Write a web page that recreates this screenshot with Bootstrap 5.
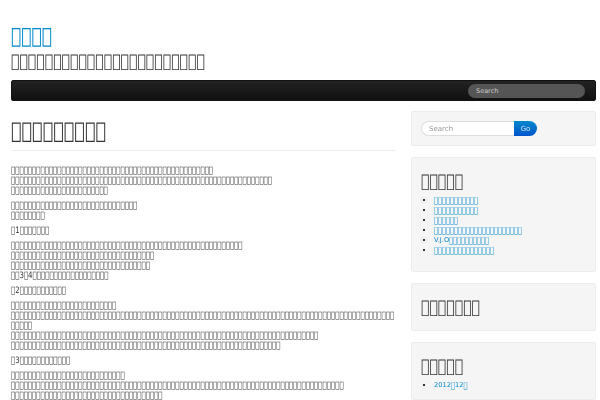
<!DOCTYPE html>
<html lang="ja"><head><meta charset="utf-8"><title>Blog</title>
<link href="https://cdn.jsdelivr.net/npm/bootstrap@5.3.0/dist/css/bootstrap.min.css" rel="stylesheet">
<style>
html,body{height:400px;overflow:hidden}
body{font-family:"DejaVu Sans",sans-serif;font-size:7.03px;line-height:10px;color:#333;text-rendering:geometricPrecision;background:#fff}
.page-wrap{padding:0 4px 0 11px;will-change:opacity}
a{color:#08c;text-decoration:none}
.tall{display:inline-block;transform:scaleY(1.25)}
.site-title{font-size:17.1px;line-height:24px;margin:25px 0 0;font-weight:400}
.site-sub{font-size:14.06px;line-height:20px;margin:3px 0 0;font-weight:400;color:#333}
.top-bar{height:21px;margin-top:8px;padding:0 10px 0 0;border-radius:2px;background:linear-gradient(#222,#111);border:1px solid #111}
.bar-search{width:117px;height:14px;border:0;border-radius:9px;background:#555;color:#ccc;font-size:6.5px;line-height:14px;padding:0 8px}
.bar-search::placeholder{color:#ccc;opacity:1}
.main-area{gap:15px;margin-top:10px}
.col-main{width:385px;flex:none}
.col-side{width:185px;flex:none}
.post-title{font-size:17.6px;line-height:24px;margin:9px 0 0;border-bottom:1px solid #eee;font-weight:400;height:30px;box-sizing:content-box}
.post-body{margin-top:14px}
.post-body p{margin:0 0 5px}
.side-well{background:#f5f5f5;border:1px solid #ececec;border-radius:2px;padding:9px;margin-bottom:11px}
.side-search{width:116px;height:15px}
.side-input{width:93px;height:15px;border:1px solid #ddd;border-right:0;border-radius:8px 0 0 8px;font-size:7.03px;padding:0 7px;background:#fff}
.side-input::placeholder{color:#999;opacity:1}
.go-btn{width:23px;height:15px;padding:0;border:0;border-radius:0 8px 8px 0;font-size:7.03px;line-height:15px;color:#d5e6f5;background:linear-gradient(#08c,#05c)}
.side-head{font-size:14.06px;line-height:20px;font-weight:400;margin:5px 0 3px}
.side-list{margin:0;padding-left:13px;font-size:6.67px;color:#333;list-style-type:square}
.side-list li{line-height:10px}
.side-links{margin-bottom:7px}
.arch-list{margin-top:1px}
</style></head>
<body>
<div class="page-wrap">
<h1 class="site-title"><a class="tall" href="#">&#xE000;&#xE000;&#xE000;&#xE000;</a></h1>
<h2 class="site-sub"><span class="tall">&#xE000;&#xE000;&#xE000;&#xE000;&#xE000;&#xE000;&#xE000;&#xE000;&#xE000;&#xE000;&#xE000;&#xE000;&#xE000;&#xE000;&#xE000;&#xE000;&#xE000;&#xE000;&#xE000;&#xE000;&#xE000;&#xE000;&#xE000;</span></h2>
<nav class="top-bar d-flex align-items-center justify-content-end"><input class="bar-search" type="text" placeholder="Search" aria-label="Search"></nav>
<div class="d-flex main-area">
<main class="col-main">
<h1 class="post-title"><span class="tall">&#xE000;&#xE000;&#xE000;&#xE000;&#xE000;&#xE000;&#xE000;&#xE000;&#xE000;</span></h1>
<div class="post-body">
<p><span class="tall">&#xE000;&#xE000;&#xE000;&#xE000;&#xE000;&#xE000;&#xE000;&#xE000;&#xE000;&#xE000;&#xE000;&#xE000;&#xE000;&#xE000;&#xE000;&#xE000;&#xE000;&#xE000;&#xE000;&#xE000;&#xE000;&#xE000;&#xE000;&#xE000;&#xE000;&#xE000;&#xE000;&#xE000;&#xE000;&#xE000;&#xE000;&#xE000;&#xE000;&#xE000;&#xE000;&#xE000;&#xE000;&#xE000;&#xE000;&#xE000;&#xE000;&#xE000;&#xE000;&#xE000;&#xE000;&#xE000;&#xE000;&#xE000;</span><br><span class="tall">&#xE000;&#xE000;&#xE000;&#xE000;&#xE000;&#xE000;&#xE000;&#xE000;&#xE000;&#xE000;&#xE000;&#xE000;&#xE000;&#xE000;&#xE000;&#xE000;&#xE000;&#xE000;&#xE000;&#xE000;&#xE000;&#xE000;&#xE000;&#xE000;&#xE000;&#xE000;&#xE000;&#xE000;&#xE000;&#xE000;&#xE000;&#xE000;&#xE000;&#xE000;&#xE000;&#xE000;&#xE000;&#xE000;&#xE000;&#xE000;&#xE000;&#xE000;&#xE000;&#xE000;&#xE000;&#xE000;&#xE000;&#xE000;&#xE000;&#xE000;&#xE000;&#xE000;&#xE000;&#xE000;&#xE000;&#xE000;&#xE000;&#xE000;&#xE000;&#xE000;&#xE000;&#xE000;</span><br><span class="tall">&#xE000;&#xE000;&#xE000;&#xE000;&#xE000;&#xE000;&#xE000;&#xE000;&#xE000;&#xE000;&#xE000;&#xE000;&#xE000;&#xE000;&#xE000;&#xE000;&#xE000;&#xE000;&#xE000;&#xE000;&#xE000;&#xE000;&#xE000;</span></p>
<p><span class="tall">&#xE000;&#xE000;&#xE000;&#xE000;&#xE000;&#xE000;&#xE000;&#xE000;&#xE000;&#xE000;&#xE000;&#xE000;&#xE000;&#xE000;&#xE000;&#xE000;&#xE000;&#xE000;&#xE000;&#xE000;&#xE000;&#xE000;&#xE000;&#xE000;&#xE000;&#xE000;&#xE000;&#xE000;&#xE000;&#xE000;</span><br><span class="tall">&#xE000;&#xE000;&#xE000;&#xE000;&#xE000;&#xE000;&#xE000;&#xE000;</span></p>
<p><span class="tall">&#xE000;1&#xE000;&#xE000;&#xE000;&#xE000;&#xE000;&#xE000;&#xE000;</span></p>
<p><span class="tall">&#xE000;&#xE000;&#xE000;&#xE000;&#xE000;&#xE000;&#xE000;&#xE000;&#xE000;&#xE000;&#xE000;&#xE000;&#xE000;&#xE000;&#xE000;&#xE000;&#xE000;&#xE000;&#xE000;&#xE000;&#xE000;&#xE000;&#xE000;&#xE000;&#xE000;&#xE000;&#xE000;&#xE000;&#xE000;&#xE000;&#xE000;&#xE000;&#xE000;&#xE000;&#xE000;&#xE000;&#xE000;&#xE000;&#xE000;&#xE000;&#xE000;&#xE000;&#xE000;&#xE000;&#xE000;&#xE000;&#xE000;&#xE000;&#xE000;&#xE000;&#xE000;&#xE000;&#xE000;&#xE000;&#xE000;</span><br><span class="tall">&#xE000;&#xE000;&#xE000;&#xE000;&#xE000;&#xE000;&#xE000;&#xE000;&#xE000;&#xE000;&#xE000;&#xE000;&#xE000;&#xE000;&#xE000;&#xE000;&#xE000;&#xE000;&#xE000;&#xE000;&#xE000;&#xE000;&#xE000;&#xE000;&#xE000;&#xE000;&#xE000;&#xE000;&#xE000;&#xE000;&#xE000;&#xE000;&#xE000;&#xE000;</span><br><span class="tall">&#xE000;&#xE000;&#xE000;&#xE000;&#xE000;&#xE000;&#xE000;&#xE000;&#xE000;&#xE000;&#xE000;&#xE000;&#xE000;&#xE000;&#xE000;&#xE000;&#xE000;&#xE000;&#xE000;&#xE000;&#xE000;&#xE000;&#xE000;&#xE000;&#xE000;&#xE000;&#xE000;&#xE000;&#xE000;&#xE000;&#xE000;&#xE000;&#xE000;</span><br><span class="tall">&#xE000;&#xE000;3&#xE000;4&#xE000;&#xE000;&#xE000;&#xE000;&#xE000;&#xE000;&#xE000;&#xE000;&#xE000;&#xE000;&#xE000;&#xE000;&#xE000;&#xE000;&#xE000;&#xE000;&#xE000;&#xE000;</span></p>
<p><span class="tall">&#xE000;2&#xE000;&#xE000;&#xE000;&#xE000;&#xE000;&#xE000;&#xE000;&#xE000;&#xE000;&#xE000;&#xE000;</span></p>
<p><span class="tall">&#xE000;&#xE000;&#xE000;&#xE000;&#xE000;&#xE000;&#xE000;&#xE000;&#xE000;&#xE000;&#xE000;&#xE000;&#xE000;&#xE000;&#xE000;&#xE000;&#xE000;&#xE000;&#xE000;&#xE000;&#xE000;&#xE000;&#xE000;&#xE000;&#xE000;</span><br><span class="tall">&#xE000;&#xE000;&#xE000;&#xE000;&#xE000;&#xE000;&#xE000;&#xE000;&#xE000;&#xE000;&#xE000;&#xE000;&#xE000;&#xE000;&#xE000;&#xE000;&#xE000;&#xE000;&#xE000;&#xE000;&#xE000;&#xE000;&#xE000;&#xE000;&#xE000;&#xE000;&#xE000;&#xE000;&#xE000;&#xE000;&#xE000;&#xE000;&#xE000;&#xE000;&#xE000;&#xE000;&#xE000;&#xE000;&#xE000;&#xE000;&#xE000;&#xE000;&#xE000;&#xE000;&#xE000;&#xE000;&#xE000;&#xE000;&#xE000;&#xE000;&#xE000;&#xE000;&#xE000;&#xE000;&#xE000;&#xE000;&#xE000;&#xE000;&#xE000;&#xE000;&#xE000;&#xE000;&#xE000;&#xE000;&#xE000;&#xE000;&#xE000;&#xE000;&#xE000;&#xE000;&#xE000;&#xE000;&#xE000;&#xE000;&#xE000;&#xE000;&#xE000;&#xE000;&#xE000;&#xE000;&#xE000;&#xE000;&#xE000;&#xE000;&#xE000;&#xE000;&#xE000;&#xE000;&#xE000;&#xE000;&#xE000;</span><br><span class="tall">&#xE000;&#xE000;&#xE000;&#xE000;&#xE000;</span><br><span class="tall">&#xE000;&#xE000;&#xE000;&#xE000;&#xE000;&#xE000;&#xE000;&#xE000;&#xE000;&#xE000;&#xE000;&#xE000;&#xE000;&#xE000;&#xE000;&#xE000;&#xE000;&#xE000;&#xE000;&#xE000;&#xE000;&#xE000;&#xE000;&#xE000;&#xE000;&#xE000;&#xE000;&#xE000;&#xE000;&#xE000;&#xE000;&#xE000;&#xE000;&#xE000;&#xE000;&#xE000;&#xE000;&#xE000;&#xE000;&#xE000;&#xE000;&#xE000;&#xE000;&#xE000;&#xE000;&#xE000;&#xE000;&#xE000;&#xE000;&#xE000;&#xE000;&#xE000;&#xE000;&#xE000;&#xE000;&#xE000;&#xE000;&#xE000;&#xE000;&#xE000;&#xE000;&#xE000;&#xE000;&#xE000;&#xE000;&#xE000;&#xE000;&#xE000;&#xE000;&#xE000;&#xE000;&#xE000;&#xE000;</span><br><span class="tall">&#xE000;&#xE000;&#xE000;&#xE000;&#xE000;&#xE000;&#xE000;&#xE000;&#xE000;&#xE000;&#xE000;&#xE000;&#xE000;&#xE000;&#xE000;&#xE000;&#xE000;&#xE000;&#xE000;&#xE000;&#xE000;&#xE000;&#xE000;&#xE000;&#xE000;&#xE000;&#xE000;&#xE000;&#xE000;&#xE000;&#xE000;&#xE000;&#xE000;&#xE000;&#xE000;&#xE000;&#xE000;&#xE000;&#xE000;&#xE000;&#xE000;&#xE000;&#xE000;&#xE000;&#xE000;&#xE000;&#xE000;&#xE000;&#xE000;&#xE000;&#xE000;&#xE000;&#xE000;&#xE000;&#xE000;&#xE000;&#xE000;&#xE000;&#xE000;&#xE000;&#xE000;&#xE000;&#xE000;&#xE000;</span></p>
<p><span class="tall">&#xE000;3&#xE000;&#xE000;&#xE000;&#xE000;&#xE000;&#xE000;&#xE000;&#xE000;&#xE000;&#xE000;&#xE000;&#xE000;</span></p>
<p><span class="tall">&#xE000;&#xE000;&#xE000;&#xE000;&#xE000;&#xE000;&#xE000;&#xE000;&#xE000;&#xE000;&#xE000;&#xE000;&#xE000;&#xE000;&#xE000;&#xE000;&#xE000;&#xE000;&#xE000;&#xE000;&#xE000;&#xE000;&#xE000;&#xE000;&#xE000;&#xE000;&#xE000;</span><br><span class="tall">&#xE000;&#xE000;&#xE000;&#xE000;&#xE000;&#xE000;&#xE000;&#xE000;&#xE000;&#xE000;&#xE000;&#xE000;&#xE000;&#xE000;&#xE000;&#xE000;&#xE000;&#xE000;&#xE000;&#xE000;&#xE000;&#xE000;&#xE000;&#xE000;&#xE000;&#xE000;&#xE000;&#xE000;&#xE000;&#xE000;&#xE000;&#xE000;&#xE000;&#xE000;&#xE000;&#xE000;&#xE000;&#xE000;&#xE000;&#xE000;&#xE000;&#xE000;&#xE000;&#xE000;&#xE000;&#xE000;&#xE000;&#xE000;&#xE000;&#xE000;&#xE000;&#xE000;&#xE000;&#xE000;&#xE000;&#xE000;&#xE000;&#xE000;&#xE000;&#xE000;&#xE000;&#xE000;&#xE000;&#xE000;&#xE000;&#xE000;&#xE000;&#xE000;&#xE000;&#xE000;&#xE000;&#xE000;&#xE000;&#xE000;&#xE000;&#xE000;&#xE000;&#xE000;&#xE000;</span><br><span class="tall">&#xE000;&#xE000;&#xE000;&#xE000;&#xE000;&#xE000;&#xE000;&#xE000;&#xE000;&#xE000;&#xE000;&#xE000;&#xE000;&#xE000;&#xE000;&#xE000;&#xE000;&#xE000;&#xE000;&#xE000;&#xE000;&#xE000;&#xE000;&#xE000;&#xE000;&#xE000;&#xE000;&#xE000;&#xE000;&#xE000;&#xE000;&#xE000;&#xE000;&#xE000;&#xE000;&#xE000;</span></p>
</div>
</main>
<aside class="col-side">
<div class="side-well"><form class="d-flex side-search"><input class="side-input" type="text" placeholder="Search" aria-label="Search"><button class="btn go-btn" type="button">Go</button></form></div>
<div class="side-well">
<h3 class="side-head"><span class="tall">&#xE000;&#xE000;&#xE000;&#xE000;&#xE000;</span></h3>
<ul class="side-list side-links">
<li><a class="tall" href="#">&#xE000;&#xE000;&#xE000;&#xE000;&#xE000;&#xE000;&#xE000;&#xE000;&#xE000;&#xE000;&#xE000;</a></li>
<li><a class="tall" href="#">&#xE000;&#xE000;&#xE000;&#xE000;&#xE000;&#xE000;&#xE000;&#xE000;&#xE000;&#xE000;&#xE000;</a></li>
<li><a class="tall" href="#">&#xE000;&#xE000;&#xE000;&#xE000;&#xE000;&#xE000;</a></li>
<li><a class="tall" href="#">&#xE000;&#xE000;&#xE000;&#xE000;&#xE000;&#xE000;&#xE000;&#xE000;&#xE000;&#xE000;&#xE000;&#xE000;&#xE000;&#xE000;&#xE000;&#xE000;&#xE000;&#xE000;&#xE000;&#xE000;&#xE000;&#xE000;</a></li>
<li><a href="#">V.J.O<span class="tall">&#xE000;&#xE000;&#xE000;&#xE000;&#xE000;&#xE000;&#xE000;&#xE000;&#xE000;&#xE000;</span></a></li>
<li><a class="tall" href="#">&#xE000;&#xE000;&#xE000;&#xE000;&#xE000;&#xE000;&#xE000;&#xE000;&#xE000;&#xE000;&#xE000;&#xE000;&#xE000;&#xE000;&#xE000;</a></li>
</ul>
</div>
<div class="side-well"><h3 class="side-head"><span class="tall">&#xE000;&#xE000;&#xE000;&#xE000;&#xE000;&#xE000;&#xE000;</span></h3></div>
<div class="side-well">
<h3 class="side-head"><span class="tall">&#xE000;&#xE000;&#xE000;&#xE000;&#xE000;</span></h3>
<ul class="side-list arch-list"><li><a href="#">2012<span class="tall">&#xE000;</span>12<span class="tall">&#xE000;</span></a></li></ul>
</div>
</aside>
</div>
</div>
<script src="https://cdn.jsdelivr.net/npm/bootstrap@5.3.0/dist/js/bootstrap.bundle.min.js"></script>
</body></html>
